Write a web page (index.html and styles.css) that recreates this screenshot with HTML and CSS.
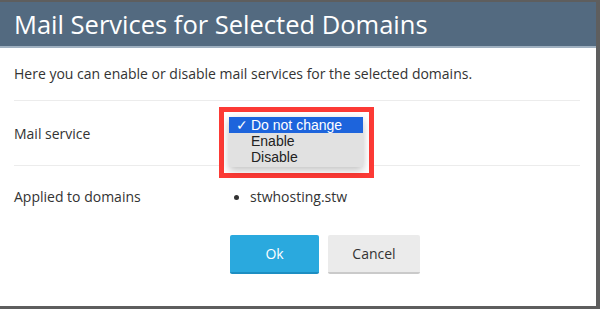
FILE: index.html
```html
<!DOCTYPE html>
<html lang="en">
<head>
    <meta charset="UTF-8">
    <title>Mail Services for Selected Domains</title>
    <link rel="stylesheet" href="styles.css">
</head>
<body>
    <div class="dialog">
        <header class="dialog-head">
            <h1>Mail Services for Selected Domains</h1>
        </header>
        <div class="dialog-body">
            <p class="hint">Here you can enable or disable mail services for the selected domains.</p>
            <div class="row">
                <div class="label">Mail service</div>
                <div class="field">
                    <div class="picker">
                        <ul class="options">
                            <li class="selected"><span class="check">✓</span>Do not change</li>
                            <li>Enable</li>
                            <li>Disable</li>
                        </ul>
                    </div>
                </div>
            </div>
            <div class="row last">
                <div class="label">Applied to domains</div>
                <div class="field">
                    <ul class="domains">
                        <li>stwhosting.stw</li>
                    </ul>
                </div>
            </div>
            <div class="actions">
                <button class="btn btn-ok">Ok</button>
                <button class="btn btn-cancel">Cancel</button>
            </div>
        </div>
    </div>
</body>
</html>
```

FILE: styles.css
```css
body {
    margin: 0;
    padding-top: 2px;
    background: #5e5e5e;
    font-family: "Open Sans", sans-serif;
    color: #333;
}

.dialog {
    width: 596px;
    height: 304px;
    background: #fff;
    display: flex;
    flex-direction: column;
}

.dialog-head {
    background: #536a80;
    border-bottom: 2px solid #9fb0c0;
    height: 44px;
    display: flex;
    align-items: center;
    padding: 0 14px;
}

.dialog-head h1 {
    margin: 0;
    font-size: 25.5px;
    font-weight: normal;
    color: #fff;
}

.dialog-body {
    padding: 0 16px 0 14px;
}

.hint {
    margin: 0;
    height: 52px;
    line-height: 52px;
    font-size: 14px;
    border-bottom: 1px solid #ececec;
}

.row {
    display: flex;
    align-items: center;
    height: 64px;
    border-bottom: 1px solid #ececec;
    font-size: 14px;
}

.row.last {
    border-bottom: none;
    height: 60px;
}

.label {
    width: 216px;
}

.field {
    flex: 1;
    position: relative;
    align-self: stretch;
    display: flex;
    align-items: center;
}

/* open native select menu, framed in red */
.picker {
    position: absolute;
    left: -11px;
    top: 6px;
    width: 145px;
    height: 61px;
    border: 5px solid #fc3a35;
    background: #fff;
    z-index: 2;
}

.options {
    list-style: none;
    margin: 5px 0 0 5px;
    padding: 0 0 2px;
    width: 134px;
    background: #e1e1e1;
    box-shadow: 0 3px 8px rgba(0, 0, 0, 0.25);
    font-family: "Liberation Sans", Arial, sans-serif;
    font-size: 14px;
    color: #222;
}

.options li {
    height: 16px;
    line-height: 16px;
    padding-left: 22px;
    position: relative;
}

.options li.selected {
    background: #1d64dc;
    color: #fff;
}

.options .check {
    position: absolute;
    left: 7px;
}

.domains {
    margin: 0;
    padding-left: 20px;
    font-size: 14px;
}

.domains li::marker {
    font-size: 13px;
}

.actions {
    display: flex;
    gap: 9px;
    padding-left: 216px;
    margin-top: 9px;
}

.btn {
    height: 39px;
    border: none;
    border-radius: 2px;
    font-family: "Open Sans", sans-serif;
    font-size: 14px;
    cursor: pointer;
}

.btn-ok {
    width: 89px;
    background: #2aa9de;
    border-bottom: 2px solid #1d8ec2;
    color: #fff;
}

.btn-cancel {
    width: 92px;
    background: #ebebeb;
    border-bottom: 2px solid #cacaca;
    color: #333;
}
```
